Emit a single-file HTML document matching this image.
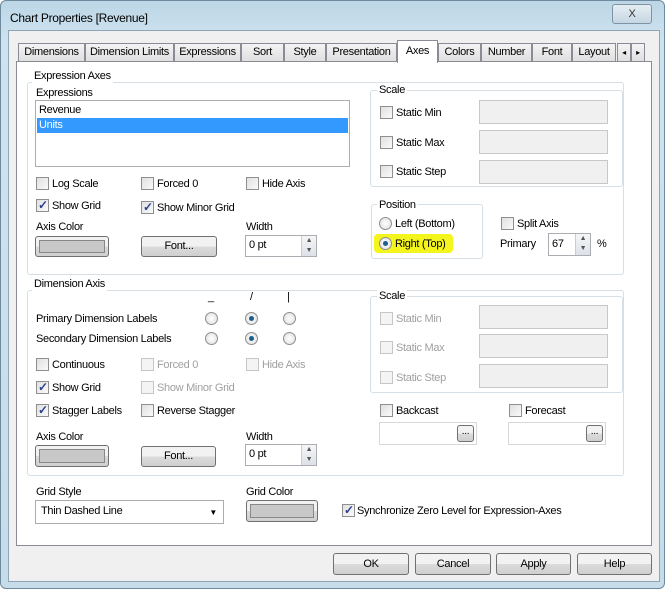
<!DOCTYPE html>
<html><head><style>
*{box-sizing:border-box;margin:0;padding:0}
body{width:668px;height:593px;position:relative;overflow:hidden;background:#fff;font:11px/15px "Liberation Sans",sans-serif;letter-spacing:-0.3px;color:#000}
.a{position:absolute;white-space:nowrap}
.frame{left:0;top:0;width:665px;height:589px;background:linear-gradient(#bcd6e6,#cfe3ef 40px,#c6dce9);border:1px solid #6d8aa0;border-radius:6px}
.body{left:8px;top:30px;width:652px;height:552px;background:#f0f0f0;border:1px solid #8ea5b8}
.panel{left:16px;top:61px;width:636px;height:485px;background:#fff;border:1px solid #898c95}
.tab{top:43px;height:19px;background:linear-gradient(#f4f4f4,#dedede);border:1px solid #898c95;border-bottom:none;text-align:center;line-height:17px}
.grp{border:1px solid #d5dfe5;border-radius:3px}
.lbl{background:#fff;padding:0 2px}
.cb{width:13px;height:13px;border:1px solid #8f8f8f;background:linear-gradient(135deg,#e0e0e0,#fafafa)}
.cb.c::after{content:"✓";position:absolute;left:1px;top:-2px;font-size:12px;line-height:15px;color:#2a3f8f;font-weight:bold}
.dis{color:#a0a0a0}
.cb.d{border-color:#c6c6c6;background:#f4f4f4}
.tb{border:1px solid #abadb3;background:#fff}
.tb.d{background:#f0f0f0;border-color:#c8c8c8}
.btn{border:1px solid #707070;border-radius:3px;background:linear-gradient(#f2f2f2 50%,#dcdcdc 50%,#cfcfcf);text-align:center}
.rd{width:13px;height:13px;border-radius:50%;border:1px solid #8f8f8f;background:radial-gradient(#fff,#dcdcdc)}
.rd.c::after{content:"";position:absolute;left:3px;top:3px;width:5px;height:5px;border-radius:50%;background:#1d5f8a}
.spin{width:15px;border-left:1px solid #ccc;background:linear-gradient(#f6f6f6,#dde2e8);font-size:7px;color:#555;text-align:center;line-height:10px}
</style></head><body>
<div class="a frame"></div>
<div class="a" style="left:10px;top:11px;font-size:12px">Chart Properties [Revenue]</div>
<div class="a btn" style="left:612px;top:4px;width:40px;height:20px;border-color:#7f93a6;background:linear-gradient(#e6eef4,#c5d6e2);font-size:11px;line-height:18px;color:#333">X</div>
<div class="a body"></div>
<div class="a tab" style="left:18px;width:67px">Dimensions</div>
<div class="a tab" style="left:85px;width:89px">Dimension Limits</div>
<div class="a tab" style="left:174px;width:67px">Expressions</div>
<div class="a tab" style="left:241px;width:43px">Sort</div>
<div class="a tab" style="left:284px;width:42px">Style</div>
<div class="a tab" style="left:326px;width:71px">Presentation</div>
<div class="a tab" style="left:438px;width:43px">Colors</div>
<div class="a tab" style="left:481px;width:51px">Number</div>
<div class="a tab" style="left:532px;width:40px">Font</div>
<div class="a tab" style="left:572px;width:44px">Layout</div>
<div class="a tab" style="left:617px;width:14px;font-size:8px">◂</div>
<div class="a tab" style="left:631px;width:14px;font-size:8px">▸</div>
<div class="a panel"></div>
<div class="a" style="left:397px;top:40px;width:41px;height:23px;background:#fff;border:1px solid #898c95;border-bottom:none;text-align:center;line-height:20px">Axes</div>

<div class="a grp" style="left:27px;top:82px;width:597px;height:193px"></div>
<div class="a lbl" style="left:32px;top:69px">Expression Axes</div>
<div class="a" style="left:36px;top:86px">Expressions</div>
<div class="a tb" style="left:35px;top:100px;width:315px;height:67px"></div>
<div class="a" style="left:39px;top:103px">Revenue</div>
<div class="a" style="left:37px;top:118px;width:311px;height:15px;background:#3399ff;color:#fff;padding-left:2px;line-height:15px">Units</div>

<div class="a grp" style="left:370px;top:90px;width:253px;height:97px"></div>
<div class="a lbl" style="left:377px;top:83px">Scale</div>
<div class="a cb" style="left:380px;top:106px"></div><div class="a" style="left:396px;top:106px">Static Min</div>
<div class="a tb d" style="left:479px;top:100px;width:129px;height:24px"></div>
<div class="a cb" style="left:380px;top:136px"></div><div class="a" style="left:396px;top:136px">Static Max</div>
<div class="a tb d" style="left:479px;top:130px;width:129px;height:24px"></div>
<div class="a cb" style="left:380px;top:165px"></div><div class="a" style="left:396px;top:165px">Static Step</div>
<div class="a tb d" style="left:479px;top:160px;width:129px;height:24px"></div>

<div class="a cb" style="left:36px;top:177px"></div><div class="a" style="left:52px;top:177px">Log Scale</div>
<div class="a cb" style="left:141px;top:177px"></div><div class="a" style="left:157px;top:177px">Forced 0</div>
<div class="a cb" style="left:246px;top:177px"></div><div class="a" style="left:262px;top:177px">Hide Axis</div>
<div class="a cb c" style="left:36px;top:199px"></div><div class="a" style="left:52px;top:199px">Show Grid</div>
<div class="a cb c" style="left:141px;top:201px"></div><div class="a" style="left:157px;top:201px">Show Minor Grid</div>
<div class="a" style="left:36px;top:220px">Axis Color</div>
<div class="a btn" style="left:35px;top:236px;width:74px;height:21px;padding:3px"><div style="width:100%;height:100%;background:#c8c8c8;border:1px solid #888"></div></div>
<div class="a btn" style="left:141px;top:236px;width:76px;height:21px;line-height:19px">Font...</div>
<div class="a" style="left:246px;top:220px">Width</div>
<div class="a tb" style="left:245px;top:235px;width:72px;height:22px;padding:2px 3px">0 pt</div>
<div class="a spin" style="left:301px;top:236px;height:20px">▲<br>▼</div>

<div class="a grp" style="left:371px;top:204px;width:112px;height:55px"></div>
<div class="a lbl" style="left:377px;top:198px">Position</div>
<div class="a rd" style="left:379px;top:217px"></div><div class="a" style="left:395px;top:217px">Left (Bottom)</div>
<div class="a" style="left:374px;top:234px;width:79px;height:19px;background:#f5f51e;border-radius:4px"></div>
<div class="a rd c" style="left:379px;top:237px"></div><div class="a" style="left:395px;top:237px">Right (Top)</div>
<div class="a cb" style="left:501px;top:217px"></div><div class="a" style="left:517px;top:217px">Split Axis</div>
<div class="a" style="left:500px;top:237px">Primary</div>
<div class="a tb" style="left:548px;top:233px;width:43px;height:23px;padding:3px 3px">67</div>
<div class="a spin" style="left:575px;top:234px;height:21px">▲<br>▼</div>
<div class="a" style="left:597px;top:237px">%</div>

<div class="a grp" style="left:27px;top:290px;width:597px;height:186px"></div>
<div class="a lbl" style="left:32px;top:277px">Dimension Axis</div>
<div class="a" style="left:208px;top:290px">_</div>
<div class="a" style="left:250px;top:290px">/</div>
<div class="a" style="left:287px;top:290px">|</div>
<div class="a" style="left:36px;top:312px">Primary Dimension Labels</div>
<div class="a" style="left:36px;top:332px">Secondary Dimension Labels</div>
<div class="a rd" style="left:205px;top:312px"></div><div class="a rd c" style="left:245px;top:312px"></div><div class="a rd" style="left:283px;top:312px"></div>
<div class="a rd" style="left:205px;top:332px"></div><div class="a rd c" style="left:245px;top:332px"></div><div class="a rd" style="left:283px;top:332px"></div>

<div class="a grp" style="left:370px;top:296px;width:253px;height:97px"></div>
<div class="a lbl" style="left:377px;top:289px">Scale</div>
<div class="a cb d" style="left:380px;top:312px"></div><div class="a dis" style="left:396px;top:312px">Static Min</div>
<div class="a tb d" style="left:479px;top:305px;width:129px;height:24px"></div>
<div class="a cb d" style="left:380px;top:341px"></div><div class="a dis" style="left:396px;top:341px">Static Max</div>
<div class="a tb d" style="left:479px;top:334px;width:129px;height:24px"></div>
<div class="a cb d" style="left:380px;top:371px"></div><div class="a dis" style="left:396px;top:371px">Static Step</div>
<div class="a tb d" style="left:479px;top:364px;width:129px;height:24px"></div>

<div class="a cb" style="left:36px;top:358px"></div><div class="a" style="left:52px;top:358px">Continuous</div>
<div class="a cb d" style="left:141px;top:358px"></div><div class="a dis" style="left:157px;top:358px">Forced 0</div>
<div class="a cb d" style="left:246px;top:358px"></div><div class="a dis" style="left:262px;top:358px">Hide Axis</div>
<div class="a cb c" style="left:36px;top:381px"></div><div class="a" style="left:52px;top:381px">Show Grid</div>
<div class="a cb d" style="left:141px;top:381px"></div><div class="a dis" style="left:157px;top:381px">Show Minor Grid</div>
<div class="a cb c" style="left:36px;top:404px"></div><div class="a" style="left:52px;top:404px">Stagger Labels</div>
<div class="a cb" style="left:141px;top:404px"></div><div class="a" style="left:157px;top:404px">Reverse Stagger</div>
<div class="a cb" style="left:380px;top:404px"></div><div class="a" style="left:396px;top:404px">Backcast</div>
<div class="a cb" style="left:509px;top:404px"></div><div class="a" style="left:525px;top:404px">Forecast</div>
<div class="a tb" style="left:379px;top:422px;width:98px;height:23px;border-color:#d8d8d8"></div>
<div class="a btn" style="left:457px;top:425px;width:17px;height:17px;font-size:10px;line-height:12px">...</div>
<div class="a tb" style="left:508px;top:422px;width:98px;height:23px;border-color:#d8d8d8"></div>
<div class="a btn" style="left:586px;top:425px;width:17px;height:17px;font-size:10px;line-height:12px">...</div>

<div class="a" style="left:36px;top:430px">Axis Color</div>
<div class="a btn" style="left:35px;top:445px;width:74px;height:22px;padding:3px"><div style="width:100%;height:100%;background:#c8c8c8;border:1px solid #888"></div></div>
<div class="a btn" style="left:141px;top:446px;width:75px;height:21px;line-height:19px">Font...</div>
<div class="a" style="left:246px;top:430px">Width</div>
<div class="a tb" style="left:245px;top:444px;width:72px;height:22px;padding:2px 3px">0 pt</div>
<div class="a spin" style="left:301px;top:445px;height:20px">▲<br>▼</div>

<div class="a" style="left:36px;top:485px">Grid Style</div>
<div class="a tb" style="left:35px;top:500px;width:189px;height:24px;padding:3px 5px">Thin Dashed Line<span style="position:absolute;right:6px;top:4px;font-size:8px">▼</span></div>
<div class="a" style="left:246px;top:485px">Grid Color</div>
<div class="a btn" style="left:246px;top:500px;width:72px;height:22px;padding:3px"><div style="width:100%;height:100%;background:#c8c8c8;border:1px solid #888"></div></div>
<div class="a cb c" style="left:342px;top:504px"></div><div class="a" style="left:357px;top:504px">Synchronize Zero Level for Expression-Axes</div>

<div class="a btn" style="left:333px;top:553px;width:76px;height:22px;line-height:20px">OK</div>
<div class="a btn" style="left:415px;top:553px;width:76px;height:22px;line-height:20px">Cancel</div>
<div class="a btn" style="left:496px;top:553px;width:75px;height:22px;line-height:20px">Apply</div>
<div class="a btn" style="left:577px;top:553px;width:75px;height:22px;line-height:20px">Help</div>
</body></html>
